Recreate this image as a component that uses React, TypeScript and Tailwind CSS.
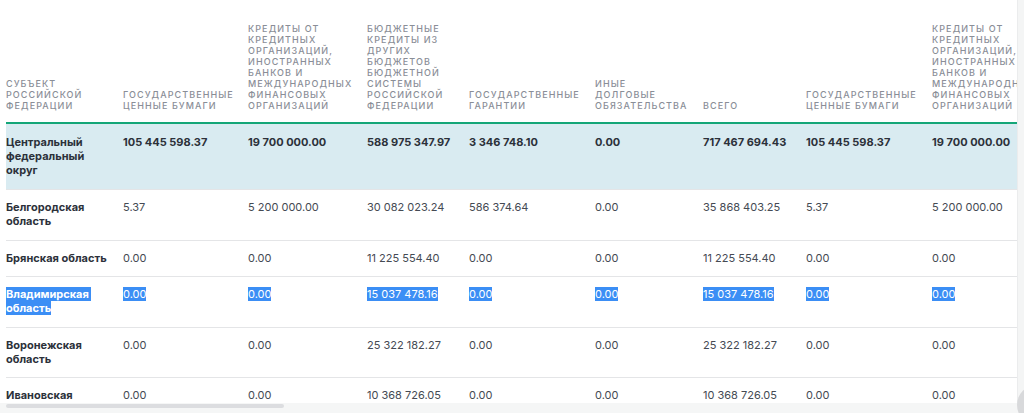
import React from "react";

const COLS =
  "grid grid-cols-[117px_125px_119px_102px_126px_108px_103px_126px_126px]";

const headers: string[][] = [
  ["СУБЪЕКТ", "РОССИЙСКОЙ", "ФЕДЕРАЦИИ"],
  ["ГОСУДАРСТВЕННЫЕ", "ЦЕННЫЕ БУМАГИ"],
  [
    "КРЕДИТЫ ОТ",
    "КРЕДИТНЫХ",
    "ОРГАНИЗАЦИЙ,",
    "ИНОСТРАННЫХ",
    "БАНКОВ И",
    "МЕЖДУНАРОДНЫХ",
    "ФИНАНСОВЫХ",
    "ОРГАНИЗАЦИЙ",
  ],
  [
    "БЮДЖЕТНЫЕ",
    "КРЕДИТЫ ИЗ",
    "ДРУГИХ",
    "БЮДЖЕТОВ",
    "БЮДЖЕТНОЙ",
    "СИСТЕМЫ",
    "РОССИЙСКОЙ",
    "ФЕДЕРАЦИИ",
  ],
  ["ГОСУДАРСТВЕННЫЕ", "ГАРАНТИИ"],
  ["ИНЫЕ", "ДОЛГОВЫЕ", "ОБЯЗАТЕЛЬСТВА"],
  ["ВСЕГО"],
  ["ГОСУДАРСТВЕННЫЕ", "ЦЕННЫЕ БУМАГИ"],
  [
    "КРЕДИТЫ ОТ",
    "КРЕДИТНЫХ",
    "ОРГАНИЗАЦИЙ,",
    "ИНОСТРАННЫХ",
    "БАНКОВ И",
    "МЕЖДУНАРОДНЫХ",
    "ФИНАНСОВЫХ",
    "ОРГАНИЗАЦИЙ",
  ],
];

type Row = {
  name: string[];
  values: string[];
  total?: boolean;
  selected?: boolean;
};

const rows: Row[] = [
  {
    name: ["Центральный", "федеральный", "округ"],
    values: [
      "105 445 598.37",
      "19 700 000.00",
      "588 975 347.97",
      "3 346 748.10",
      "0.00",
      "717 467 694.43",
      "105 445 598.37",
      "19 700 000.00",
    ],
    total: true,
  },
  {
    name: ["Белгородская", "область"],
    values: [
      "5.37",
      "5 200 000.00",
      "30 082 023.24",
      "586 374.64",
      "0.00",
      "35 868 403.25",
      "5.37",
      "5 200 000.00",
    ],
  },
  {
    name: ["Брянская область"],
    values: ["0.00", "0.00", "11 225 554.40", "0.00", "0.00", "11 225 554.40", "0.00", "0.00"],
  },
  {
    name: ["Владимирская ", "область"],
    values: ["0.00", "0.00", "15 037 478.16", "0.00", "0.00", "15 037 478.16", "0.00", "0.00"],
    selected: true,
  },
  {
    name: ["Воронежская", "область"],
    values: ["0.00", "0.00", "25 322 182.27", "0.00", "0.00", "25 322 182.27", "0.00", "0.00"],
  },
  {
    name: ["Ивановская", "область"],
    values: ["0.00", "0.00", "10 368 726.05", "0.00", "0.00", "10 368 726.05", "0.00", "0.00"],
  },
];

function Sel({ on, children }: { on?: boolean; children: React.ReactNode }) {
  return on ? (
    <span className="bg-[#3b8ef5] text-white whitespace-pre">{children}</span>
  ) : (
    <span className="whitespace-pre">{children}</span>
  );
}

export default function App() {
  return (
    <div
      className="relative w-[1024px] h-[413px] overflow-hidden bg-white"
      style={{ fontFamily: "Inter, 'Noto Sans', sans-serif" }}
    >
      <div className="flex h-[403px]">
        <div className="w-[1017px] h-[403px] overflow-hidden pl-[6px]">
          <div className="w-[1200px]">
            {/* header */}
            <div
              className={`${COLS} h-[124px] items-end pb-[11px] border-b-2 border-[#14a678]`}
            >
              {headers.map((h, i) => (
                <div
                  key={i}
                  className="text-[9px] leading-[11px] font-medium tracking-[0.12em] text-[#8a8e97] whitespace-nowrap"
                >
                  {h.map((l, j) => (
                    <div key={j}>{l}</div>
                  ))}
                </div>
              ))}
            </div>
            {/* rows */}
            {rows.map((r, i) => (
              <div
                key={i}
                className={
                  r.total
                    ? `${COLS} bg-[#d9ebf1] pt-[11px] pb-[12px] border-b border-[#e4e5e7]`
                    : `${COLS} pt-[10px] pb-[11.5px] border-b border-[#e4e5e7]`
                }
              >
                <div className="text-[11px] leading-[14px] font-bold text-[#2c313a]">
                  {r.name.map((n, j) => (
                    <div key={j}>
                      <Sel on={r.selected}>{n}</Sel>
                    </div>
                  ))}
                </div>
                {r.values.map((v, j) => (
                  <div
                    key={j}
                    className={
                      r.total
                        ? "text-[11px] leading-[14px] font-bold text-[#2c313a] whitespace-nowrap"
                        : "text-[11px] leading-[14px] text-[#454a53] whitespace-nowrap"
                    }
                  >
                    <Sel on={r.selected}>{v}</Sel>
                  </div>
                ))}
              </div>
            ))}
          </div>
        </div>
        <div className="w-[7px] h-[403px] bg-[#f4f5f5] border-l border-[#ebeced]" />
      </div>
      {/* horizontal scrollbar */}
      <div className="h-[10px] bg-[#f5f6f6] pl-[6px] pt-[1px]">
        <div className="w-[278px] h-[4px] rounded-full bg-[#dcdde0]" />
      </div>
      {/* floating circle */}
      <div className="absolute left-[1017px] top-[385px] w-[40px] h-[40px] rounded-full bg-[#d8d9db]" />
    </div>
  );
}
